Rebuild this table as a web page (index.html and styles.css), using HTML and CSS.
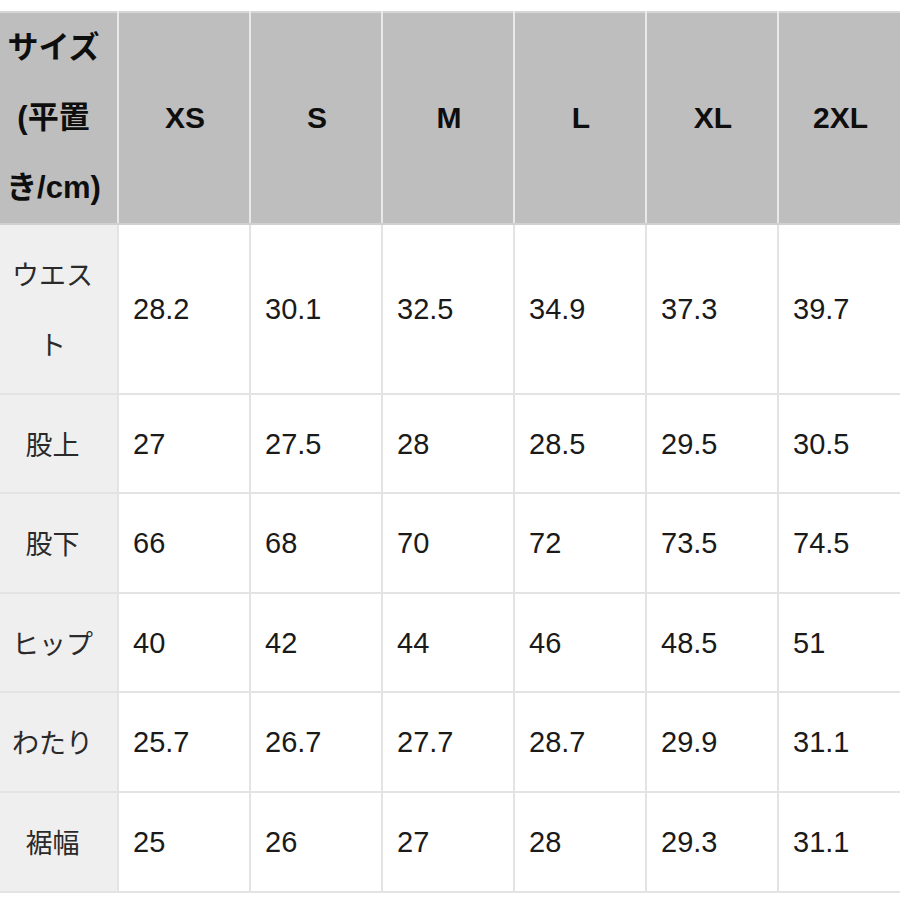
FILE: index.html
```html
<!DOCTYPE html>
<html lang="ja">
<head>
<meta charset="utf-8">
<title>サイズ表</title>
<link rel="stylesheet" href="styles.css">
</head>
<body>
<table class="size-table">
  <colgroup>
    <col class="c-label">
    <col class="c-size">
    <col class="c-size">
    <col class="c-size">
    <col class="c-size">
    <col class="c-size">
    <col class="c-last">
  </colgroup>
  <thead>
    <tr>
      <th class="corner">サイズ<br>(平置<br>き/cm)</th>
      <th>XS</th>
      <th>S</th>
      <th>M</th>
      <th>L</th>
      <th>XL</th>
      <th>2XL</th>
    </tr>
  </thead>
  <tbody>
    <tr>
      <th class="label">ウエスト</th>
      <td>28.2</td><td>30.1</td><td>32.5</td><td>34.9</td><td>37.3</td><td>39.7</td>
    </tr>
    <tr>
      <th class="label">股上</th>
      <td>27</td><td>27.5</td><td>28</td><td>28.5</td><td>29.5</td><td>30.5</td>
    </tr>
    <tr>
      <th class="label">股下</th>
      <td>66</td><td>68</td><td>70</td><td>72</td><td>73.5</td><td>74.5</td>
    </tr>
    <tr>
      <th class="label">ヒップ</th>
      <td>40</td><td>42</td><td>44</td><td>46</td><td>48.5</td><td>51</td>
    </tr>
    <tr>
      <th class="label">わたり</th>
      <td>25.7</td><td>26.7</td><td>27.7</td><td>28.7</td><td>29.9</td><td>31.1</td>
    </tr>
    <tr>
      <th class="label">裾幅</th>
      <td>25</td><td>26</td><td>27</td><td>28</td><td>29.3</td><td>31.1</td>
    </tr>
  </tbody>
</table>
</body>
</html>
```

FILE: styles.css
```css
html, body {
  margin: 0;
  padding: 0;
  background: #ffffff;
  overflow: hidden;
}

body {
  font-family: "Liberation Sans", Arial, "Noto Sans CJK JP", sans-serif;
  color: #1c1c1c;
}

.size-table {
  margin-top: 11px;
  border-collapse: collapse;
  table-layout: fixed;
  width: 901px;
}

.c-label { width: 118px; }
.c-size { width: 132px; }
.c-last { width: 123px; }

.size-table th,
.size-table td {
  border: 2px solid #e3e3e3;
  padding: 0;
}

.size-table thead th {
  background: #bebebe;
  font-weight: 700;
  font-size: 30px;
  line-height: 70px;
  height: 208px;
  text-align: center;
  color: #0e0e0e;
  border-color: #e9e9e9;
  border-top-color: #d6d6d6;
  border-bottom-color: #d0d0d0;
  padding: 0 0 0 2px;
}

.size-table thead th.corner {
  font-size: 31px;
  padding: 0 10px 0 0;
  border-left: none;
}

.size-table tbody th.label {
  background: #efefef;
  font-family: "Noto Sans CJK JP", "Liberation Sans", sans-serif;
  font-weight: 400;
  font-size: 27px;
  line-height: 70px;
  color: #2a2a2a;
  text-align: center;
  padding: 14px 14px 13.6px 2px;
  border-left: none;
}

.size-table tbody td {
  font-size: 29px;
  line-height: 70px;
  padding: 14px 0 13.6px 14px;
  text-align: left;
  color: #1a1a1a;
  background: #ffffff;
}
```
